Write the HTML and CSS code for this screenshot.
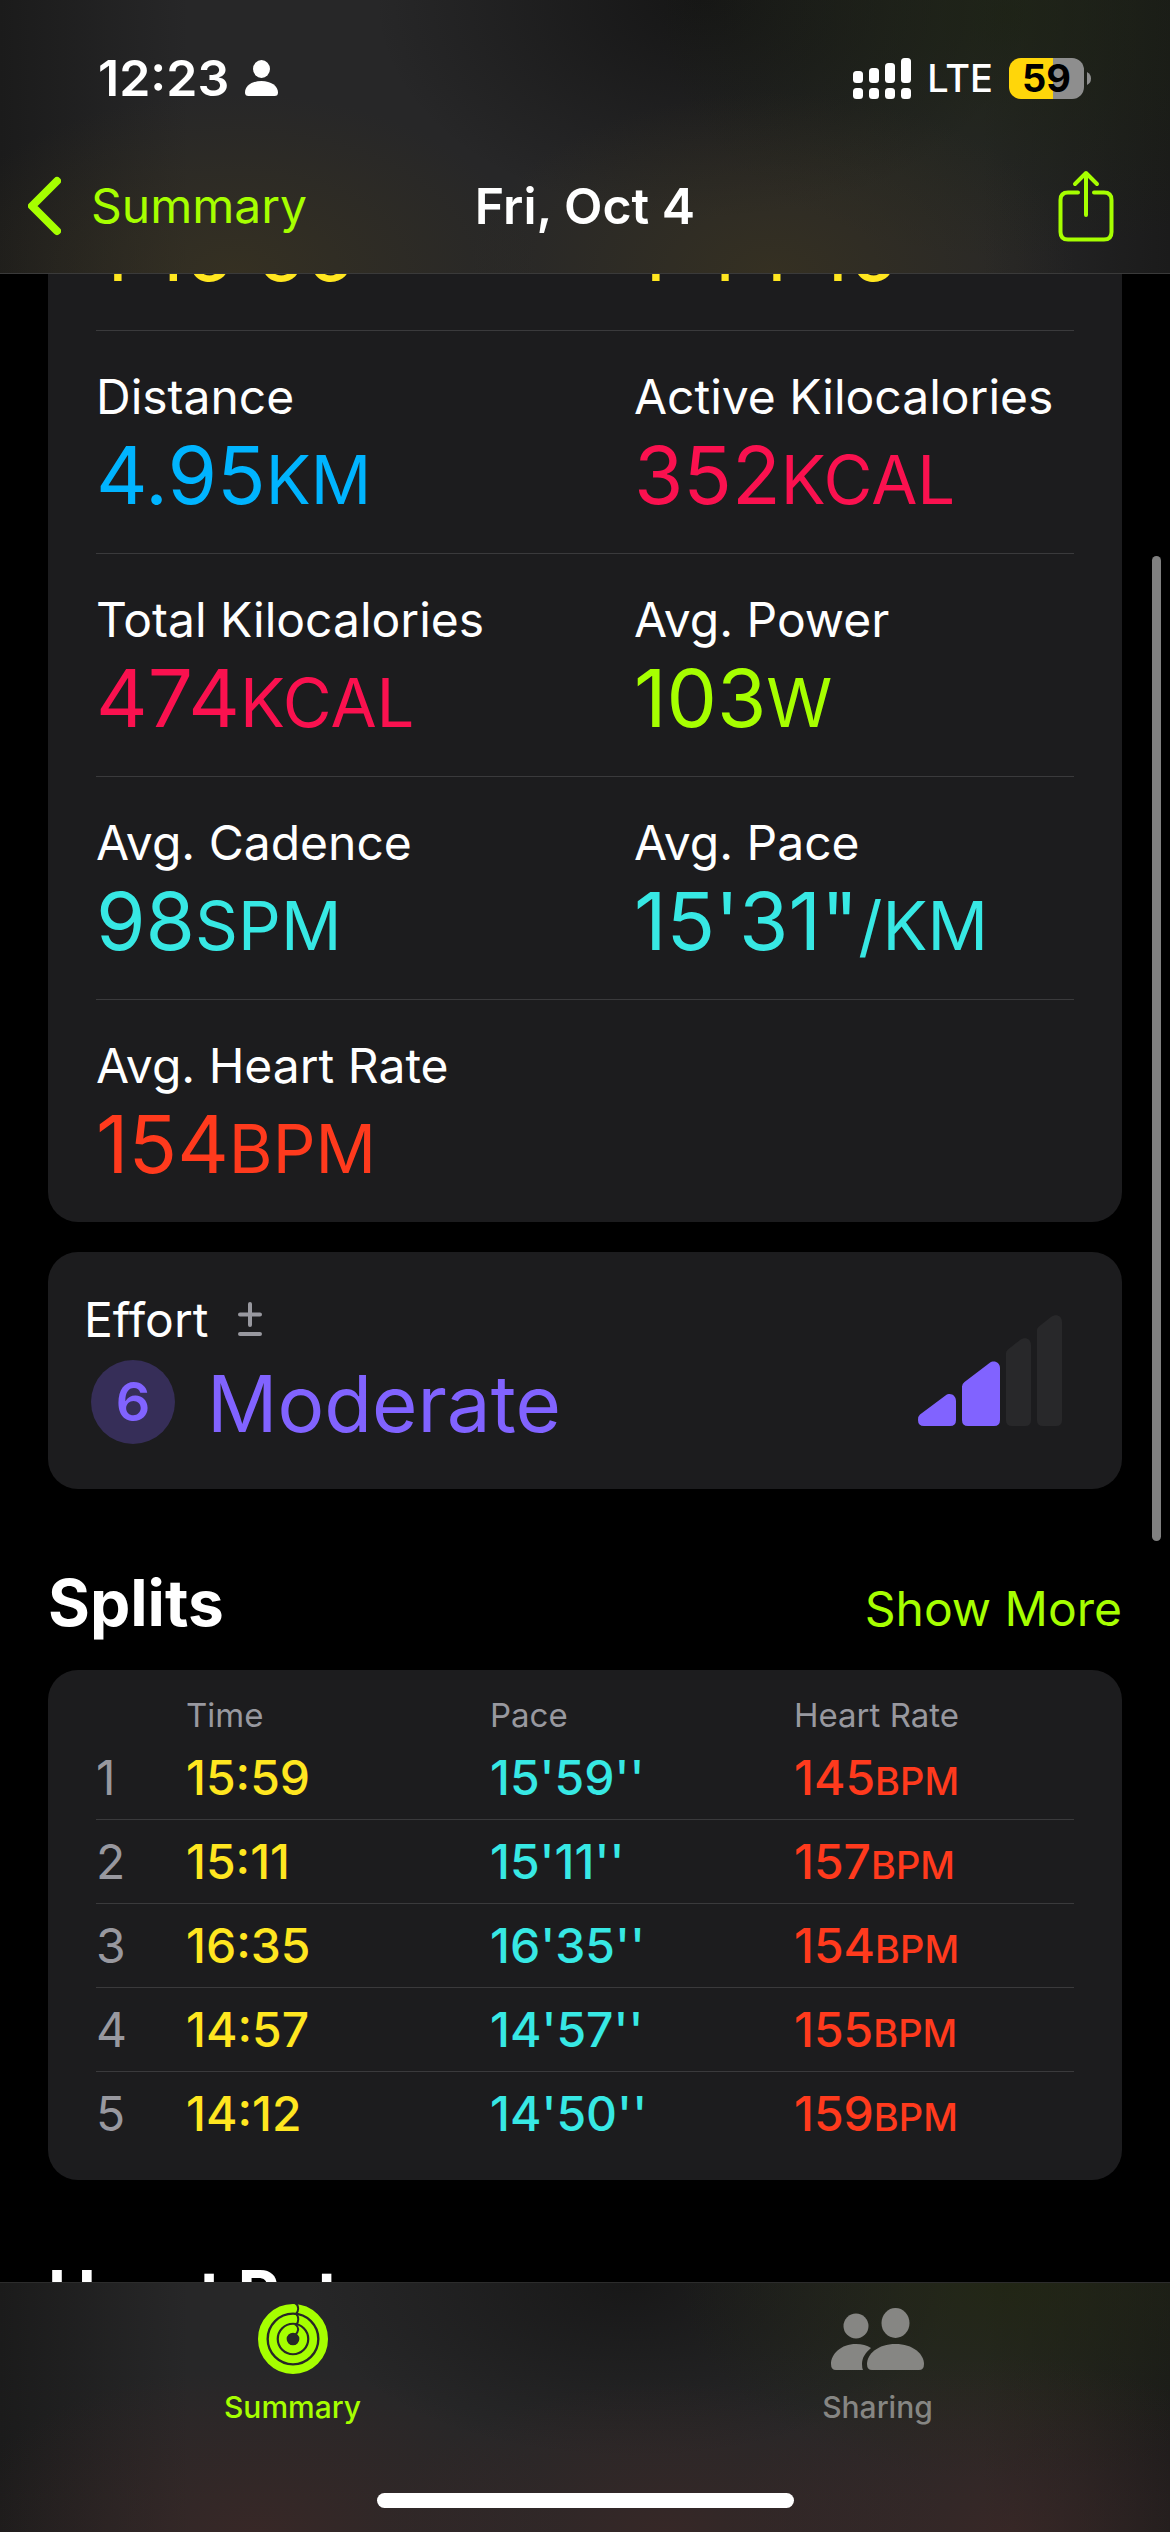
FILE: index.html
```html
<!DOCTYPE html>
<html lang="en">
<head>
<meta charset="utf-8">
<meta name="viewport" content="width=device-width, initial-scale=1">
<title>Fri, Oct 4</title>
<link rel="stylesheet" href="styles.css">
</head>
<body>
<header class="top">
  <div class="status">
    <div class="status-left">
      <span class="clock">12:23</span>
      <svg class="person" viewBox="0 0 33 36" width="33" height="36" aria-hidden="true"><ellipse cx="16.500" cy="9" rx="8.500" ry="9"/><path d="M0 32.500C0 26 7 21 16.500 21S33 26 33 32.500Q33 36 29.500 36H3.500Q0 36 0 32.500Z"/></svg>
    </div>
    <div class="status-right">
      <svg viewBox="0 0 58 41" width="58" height="41" aria-hidden="true"><rect x="0" y="13" width="10" height="12" rx="3.500"/><rect x="16" y="10" width="10" height="15" rx="3.500"/><rect x="32" y="5" width="10" height="20" rx="3.500"/><rect x="48" y="0" width="10" height="25" rx="3.500"/><rect x="0" y="30" width="10" height="11" rx="3.500"/><rect x="16" y="30" width="10" height="11" rx="3.500"/><rect x="32" y="30" width="10" height="11" rx="3.500"/><rect x="48" y="30" width="10" height="11" rx="3.500"/></svg>
      <span class="network">LTE</span>
      <span class="battery"><span class="battery-body">59</span><svg viewBox="0 0 4 13" width="4" height="13" aria-hidden="true"><path d="M0 0Q4 2 4 6.500T0 13Z"/></svg></span>
    </div>
  </div>
  <nav class="nav">
    <a class="back" href="#summary"><svg viewBox="0 0 33 66" width="33" height="66" aria-hidden="true"><path d="M29 8L4 33L29 58"/></svg>Summary</a>
    <h1 class="title">Fri, Oct 4</h1>
    <button class="share" type="button" aria-label="Share"><svg viewBox="0 0 56 72" width="56" height="72" aria-hidden="true"><path d="M20 22.500H10Q2.500 22.500 2.500 30V62Q2.500 69.500 10 69.500H46Q53.500 69.500 53.500 62V30Q53.500 22.500 46 22.500H36M28 45V3M17 14L28 3L39 14"/></svg></button>
  </nav>
</header>

<main class="content">
  <section class="card stats">
    <div class="stat-row clipped"><div class="value yellow">1:16:56</div><div class="value yellow">1:44:16</div></div>
    <div class="stat-row">
      <div><div class="label">Distance</div><div class="value blue">4.95<span class="unit">KM</span></div></div>
      <div><div class="label">Active Kilocalories</div><div class="value pink">352<span class="unit">KCAL</span></div></div>
    </div>
    <div class="stat-row">
      <div><div class="label">Total Kilocalories</div><div class="value pink">474<span class="unit">KCAL</span></div></div>
      <div><div class="label">Avg. Power</div><div class="value green">103<span class="unit">W</span></div></div>
    </div>
    <div class="stat-row">
      <div><div class="label">Avg. Cadence</div><div class="value cyan">98<span class="unit">SPM</span></div></div>
      <div><div class="label">Avg. Pace</div><div class="value cyan">15'31"<span class="unit">/KM</span></div></div>
    </div>
    <div class="stat-row">
      <div><div class="label">Avg. Heart Rate</div><div class="value red">154<span class="unit">BPM</span></div></div>
    </div>
  </section>

  <section class="card effort">
    <div>
      <div class="effort-head"><span class="label">Effort</span><svg viewBox="0 0 24 37" width="24" height="37" aria-hidden="true"><path d="M12 2V23M2 12.500H22M2 32H22"/></svg></div>
      <div class="effort-level"><span class="score">6</span><span class="level">Moderate</span></div>
    </div>
    <svg class="bars" viewBox="0 0 144 111" width="144" height="111" aria-hidden="true"><g fill="#8163ff"><path d="M2 99.500L27.500 80.500C32 77 38 80 38 86V105Q38 111 32 111H6Q0 111 0 105Q0 101 2 99.500Z"/><path d="M46.500 67L71.500 48C76 44.500 82 47.500 82 53V105Q82 111 76 111H50Q44 111 44 105V71.500Q44 69 46.500 67Z"/></g><g fill="#28282a"><path d="M90 34.500L102 25C107 21 113 24 113 30V105Q113 111 107 111H94Q88 111 88 105V38Q88 36 90 34.500Z"/><path d="M121 11.500L133 2C138 -2 144 1 144 7V105Q144 111 138 111H125Q119 111 119 105V15Q119 13 121 11.500Z"/></g></svg>
  </section>

  <div class="section-head"><h2>Splits</h2><a href="#splits">Show More</a></div>
  <section class="card splits">
    <table>
      <thead><tr><th class="num"></th><th class="mid">Time</th><th class="mid">Pace</th><th>Heart Rate</th></tr></thead>
      <tbody>
        <tr><td class="index">1</td><td class="yellow">15:59</td><td class="cyan">15'59''</td><td class="red">145<span class="unit">BPM</span></td></tr>
        <tr><td class="index">2</td><td class="yellow">15:11</td><td class="cyan">15'11''</td><td class="red">157<span class="unit">BPM</span></td></tr>
        <tr><td class="index">3</td><td class="yellow">16:35</td><td class="cyan">16'35''</td><td class="red">154<span class="unit">BPM</span></td></tr>
        <tr><td class="index">4</td><td class="yellow">14:57</td><td class="cyan">14'57''</td><td class="red">155<span class="unit">BPM</span></td></tr>
        <tr><td class="index">5</td><td class="yellow">14:12</td><td class="cyan">14'50''</td><td class="red">159<span class="unit">BPM</span></td></tr>
      </tbody>
    </table>
  </section>

  <div class="section-head"><h2>Heart Rate</h2><a href="#heart-rate">Show More</a></div>
  <div class="scroll-thumb"></div>
</main>

<footer class="tabbar">
  <nav class="tabs">
    <a class="tab active" href="#summary">
      <svg viewBox="0 0 70 70" width="70" height="70" aria-hidden="true">
        <mask id="caps"><rect width="70" height="70" fill="#fff"/><g fill="none" stroke="#000" stroke-width="2"><path d="M37 -1C41 1 41 7 38 10C41 12 41 18 38 21C41 23 41 28 37 31"/></g></mask>
        <g mask="url(#caps)" fill="none" stroke="currentColor"><circle cx="35" cy="35" r="30.750" stroke-width="8.500"/><circle cx="35" cy="35" r="20.250" stroke-width="7.800"/><circle cx="35" cy="35" r="10.250" stroke-width="7.800"/></g>
      </svg>
      <span>Summary</span>
    </a>
    <a class="tab" href="#sharing">
      <svg viewBox="0 -4 94 70" width="94" height="70" fill="currentColor" aria-hidden="true"><circle cx="25" cy="18" r="12.500"/><ellipse cx="64.500" cy="15" rx="14" ry="15"/><path d="M36 56C36 46 47 36 64.500 36S93 46 93 56Q93 62 88 62H41Q36 62 36 56Z"/><path d="M0 56C0 46 10 36 25 36C31 36 36 37.500 40 40C34 45 31 50 31 56Q31 60 32 62H5Q0 62 0 56Z"/></svg>
      <span>Sharing</span>
    </a>
  </nav>
  <div class="home"></div>
</footer>
</body>
</html>
```
FILE: styles.css
```css
* { box-sizing: border-box; }
body {
  margin: 0;
  height: 100vh;
  display: flex;
  flex-direction: column;
  background: #000;
  color: #fff;
  font-family: Inter, "Liberation Sans", sans-serif;
  overflow: hidden;
}
h1, h2 { margin: 0; }
a { color: #a6ff00; text-decoration: none; }
svg { display: block; flex: none; }

.yellow { color: #ffe620; }
.blue { color: #00b4ff; }
.pink { color: #fa114f; }
.green { color: #a6ff00; }
.cyan { color: #37e8e4; }
.red { color: #ff3a1d; }

/* Top bar */
.top {
  flex: none;
  height: 274px;
  border-bottom: 1px solid #3a3a3a;
  background:
    radial-gradient(ellipse 26% 66% at 20% 100%, rgba(62, 54, 30, .6), transparent),
    radial-gradient(ellipse 26% 66% at 66% 100%, rgba(62, 54, 30, .6), transparent),
    radial-gradient(ellipse 30% 90% at 86% 5%, rgba(26, 34, 14, .6), transparent),
    radial-gradient(ellipse 28% 80% at 60% 0%, rgba(20, 20, 20, .9), transparent),
    linear-gradient(90deg, #1b1b1b, #272728 16%, #272728 84%, #1b1b1b);
}
.status {
  display: flex;
  justify-content: space-between;
  align-items: center;
  height: 156px;
  padding: 0 79px 0 98px;
}
.status-left { display: flex; align-items: center; gap: 16px; }
.status-left svg, .status-right svg { fill: #fff; }
.clock { font-size: 50px; font-weight: 600; line-height: 60px; }
.status-right { display: flex; align-items: center; gap: 16px; }
.network { font-size: 38px; font-weight: 500; line-height: 48px; }
.battery { display: flex; align-items: center; gap: 3px; }
.status-right .battery svg { fill: #8e8e8e; }
.battery-body {
  width: 75px;
  height: 41px;
  border-radius: 12px;
  background: linear-gradient(90deg, #ffd60a 59%, #8e8e8e 59%);
  color: #000;
  font-size: 38px;
  font-weight: 700;
  line-height: 41px;
  text-align: center;
}
.nav {
  display: grid;
  grid-template-columns: 1fr auto 1fr;
  align-items: center;
  height: 100px;
  padding: 0 28px;
}
.back { display: flex; align-items: center; gap: 30px; font-size: 48px; line-height: 60px; }
.back svg { fill: none; stroke: currentColor; stroke-width: 8; stroke-linecap: round; stroke-linejoin: round; }
.title { font-size: 50px; font-weight: 600; line-height: 60px; }
.share {
  justify-self: end;
  margin-right: 28px;
  padding: 0;
  border: 0;
  background: none;
  color: #a6ff00;
}
.share svg { fill: none; stroke: currentColor; stroke-width: 4; stroke-linecap: round; stroke-linejoin: round; }

/* Scrolled content */
.content {
  position: relative;
  flex: 1;
  min-height: 0;
  overflow: hidden;
  padding: 0 48px;
}
.card { background: #1c1c1e; border-radius: 30px; }
.stats { border-radius: 0 0 30px 30px; padding: 0 48px; }
.stat-row {
  display: grid;
  grid-template-columns: 55% 45%;
  padding: 36px 0 30px;
  border-top: 1px solid #3a3a3c;
}
.stat-row.clipped {
  height: 56px;
  padding-top: 0;
  align-items: end;
  align-content: end;
  border-top: 0;
}
.label { font-size: 48px; line-height: 60px; white-space: nowrap; }
.value { font-size: 80px; line-height: 96px; white-space: nowrap; }
.value .unit { font-size: 67px; line-height: 1; }

.effort {
  display: flex;
  justify-content: space-between;
  align-items: center;
  margin-top: 30px;
  padding: 38px 60px 41px 36px;
}
.effort-head { display: flex; align-items: center; gap: 30px; margin-bottom: 10px; }
.effort-head svg { fill: none; stroke: #98989f; stroke-width: 4; stroke-linecap: round; }
.effort-level { display: flex; gap: 32px; padding-left: 7px; color: #8163ff; }
.score {
  width: 84px;
  height: 84px;
  border-radius: 50%;
  background: #362e58;
  font-size: 54px;
  font-weight: 600;
  line-height: 84px;
  text-align: center;
}
.level { font-size: 78px; line-height: 88px; }
.bars { margin-top: 3px; }

.section-head {
  display: flex;
  justify-content: space-between;
  align-items: baseline;
  margin: 74px 0 27px;
}
.section-head h2 { font-size: 64px; font-weight: 700; line-height: 80px; }
.section-head a { font-size: 48px; line-height: 60px; }

.splits { padding: 24px 48px; }
.splits table { width: 100%; table-layout: fixed; border-spacing: 0; }
.splits th, .splits td { padding: 0; text-align: left; vertical-align: baseline; }
.splits th { color: #98989f; font-size: 33px; font-weight: 400; line-height: 42px; }
.splits .num { width: 90px; }
.splits .mid { width: 304px; }
.splits td { font-size: 48px; font-weight: 500; line-height: 83px; border-bottom: 1px solid #3a3a3c; }
.splits tr:last-child td { border-bottom-color: transparent; }
.splits .index { color: #98989f; font-weight: 400; }
.splits .unit { font-size: 38px; line-height: 1; }

.scroll-thumb {
  position: absolute;
  top: 282px;
  right: 9px;
  width: 9px;
  height: 985px;
  border-radius: 5px;
  background: #808080;
}

/* Tab bar */
.tabbar {
  flex: none;
  height: 250px;
  display: flex;
  flex-direction: column;
  align-items: center;
  justify-content: space-between;
  padding: 21px 0 24px;
  border-top: 1px solid #2c2c2c;
  background:
    radial-gradient(ellipse 26% 66% at 22% 100%, rgba(64, 40, 38, .65), transparent),
    radial-gradient(ellipse 24% 60% at 57% 100%, rgba(64, 40, 38, .6), transparent),
    radial-gradient(ellipse 24% 70% at 86% 100%, rgba(64, 40, 38, .65), transparent),
    radial-gradient(ellipse 28% 80% at 86% 0%, rgba(32, 38, 14, .7), transparent),
    radial-gradient(ellipse 28% 70% at 54% 0%, rgba(20, 20, 20, .8), transparent),
    linear-gradient(90deg, #1b1b1b, #272728 16%, #272728 84%, #1b1b1b);
}
.tabs { display: flex; width: 100%; }
.tab {
  flex: 1;
  display: flex;
  flex-direction: column;
  align-items: center;
  gap: 14px;
  color: #868683;
  font-size: 30px;
  font-weight: 500;
  line-height: 38px;
}
.tab.active { color: #a6ff00; }
.home { width: 417px; max-width: 50%; height: 15px; border-radius: 8px; background: #fff; }
```
